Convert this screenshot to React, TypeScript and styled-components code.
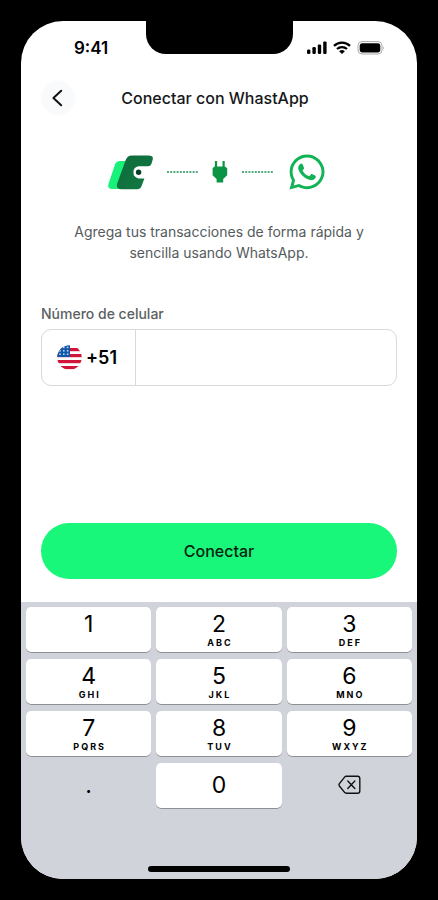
import React, { useState } from "react";
import styled, { createGlobalStyle } from "styled-components";
import { FaWhatsapp } from "react-icons/fa";

const GlobalStyle = createGlobalStyle`
  *, *::before, *::after { box-sizing: border-box; }
  body {
    margin: 0;
    background: #000;
    font-family: Inter, "Liberation Sans", sans-serif;
    color: #16181a;
  }
  button, input { font: inherit; color: inherit; }
`;

const Stage = styled.div`
  display: flex;
  min-height: 100vh;
  padding: 21px;
`;

const Phone = styled.div`
  flex: 1;
  display: flex;
  flex-direction: column;
  background: #fff;
  border-radius: 42px;
  overflow: hidden;
`;

const StatusBar = styled.div`
  display: grid;
  grid-template-columns: 1fr 147px 1fr;
`;

const Clock = styled.time`
  padding: 16px 0 0 53px;
  font-size: 17px;
  line-height: 22px;
  font-weight: 600;
  color: #000;
`;

const Notch = styled.div`
  height: 33px;
  background: #000;
  border-radius: 0 0 20px 20px;
`;

const Indicators = styled.div`
  display: flex;
  align-items: flex-start;
  gap: 6px;
  padding: 20px 0 0 14px;
`;

const Header = styled.header`
  display: grid;
  grid-template-columns: 34px 1fr 42px;
  align-items: center;
  padding: 22px 20px 0;
`;

const BackButton = styled.button`
  display: grid;
  place-items: center;
  width: 34px;
  height: 34px;
  padding: 0;
  border: 0;
  border-radius: 50%;
  background: #f8fafb;
`;

const Title = styled.h1`
  margin: 0;
  font-size: 16px;
  line-height: 24px;
  font-weight: 500;
  text-align: center;
`;

const Main = styled.main`
  flex: 1;
  display: flex;
  flex-direction: column;
  padding: 37px 20px 23px;
`;

const LinkRow = styled.div`
  display: flex;
  align-items: center;
  justify-content: center;
  gap: 14px;
  height: 40px;
  padding-right: 4px;
`;

const Description = styled.p`
  margin: 29px 0 0;
  padding: 0 24px;
  font-size: 14px;
  line-height: 21px;
  color: #555b5d;
  text-align: center;
`;

const Form = styled.form`
  flex: 1;
  display: flex;
  flex-direction: column;
  margin-top: 41px;
`;

const Label = styled.label`
  font-size: 14px;
  line-height: 20px;
  font-weight: 500;
  color: #5b6163;
`;

const PhoneField = styled.div`
  display: flex;
  height: 57px;
  margin-top: 5px;
  border: 1px solid #d6dada;
  border-radius: 10px;
  overflow: hidden;
`;

const Prefix = styled.span`
  display: flex;
  align-items: center;
  gap: 4px;
  width: 94px;
  padding-left: 15px;
  border-right: 1px solid #d6dada;
  font-size: 18px;
  font-weight: 600;
  color: #000;
`;

const NumberInput = styled.input`
  flex: 1;
  min-width: 0;
  padding: 0 16px;
  border: 0;
  outline: 0;
  background: transparent;
  font-size: 18px;
`;

const SubmitButton = styled.button`
  height: 56px;
  margin-top: auto;
  border: 0;
  border-radius: 28px;
  background: #18f77a;
  color: #07240f;
  font-size: 16px;
  font-weight: 500;
`;

const Keyboard = styled.section`
  display: flex;
  flex-direction: column;
  background: #d0d3da;
`;

const Keys = styled.div`
  display: grid;
  grid-template-columns: repeat(3, 1fr);
  grid-auto-rows: 46px;
  gap: 6px 5px;
  padding: 5px 5px 0;
`;

const Key = styled.button<{ $plain?: boolean; $centered?: boolean }>`
  display: flex;
  flex-direction: column;
  align-items: center;
  justify-content: ${(p) => (p.$centered ? "center" : "flex-start")};
  padding: ${(p) => (p.$centered ? "0 0 2px" : "4px 0 0")};
  border: 0;
  border-radius: 5px;
  background: ${(p) => (p.$plain ? "transparent" : "#fff")};
  box-shadow: ${(p) => (p.$plain ? "none" : "inset 0 -1px 0 #8e9096")};
  color: #000;
`;

const Digit = styled.span`
  font-size: 23px;
  line-height: 26px;
`;

const Letters = styled.span`
  padding-left: 2px;
  font-size: 9px;
  line-height: 11px;
  font-weight: 700;
  letter-spacing: 2px;
`;

const HomeIndicator = styled.div`
  width: 142px;
  height: 6px;
  margin: 57px auto 7px;
  border-radius: 3px;
  background: #000;
`;

const SignalIcon = () => (
  <svg width="20" height="14" viewBox="0 0 20 14" aria-hidden="true">
    <rect x="0" y="8.6" width="3.4" height="4.4" rx="1.2" />
    <rect x="5.4" y="6" width="3.4" height="7" rx="1.2" />
    <rect x="10.8" y="3.4" width="3.4" height="9.6" rx="1.2" />
    <rect x="16.2" y="0.4" width="3.4" height="12.6" rx="1.2" />
  </svg>
);

const WifiIcon = () => (
  <svg width="18" height="14" viewBox="0 0 18 14" aria-hidden="true">
    <g fill="none" stroke="#000" strokeWidth="2.3">
      <path d="M1 4.9 A11.6 11.6 0 0 1 17 4.9" />
      <path d="M4 8 A7.4 7.4 0 0 1 14 8" />
    </g>
    <path d="M9 13.1 L6.1 10.3 A4.3 4.3 0 0 1 11.9 10.3 Z" />
  </svg>
);

const BatteryIcon = () => (
  <svg width="28" height="14" viewBox="0 0 28 14" aria-hidden="true">
    <rect x="1" y="0.6" width="24" height="12.4" rx="4" fill="none" stroke="#a9a9a9" />
    <rect x="2.7" y="2.2" width="20.6" height="9.2" rx="2.6" />
    <path d="M26.3 4.8 Q28 6.8 26.3 8.8 Z" fill="#a9a9a9" />
  </svg>
);

const ChevronIcon = () => (
  <svg width="18" height="18" viewBox="0 0 18 18" fill="none" aria-hidden="true">
    <path
      d="M12.2 1.8 L4.4 9 L12.2 16.2"
      stroke="#101214"
      strokeWidth="2"
      strokeLinecap="round"
      strokeLinejoin="round"
    />
  </svg>
);

const WalletLogo = () => (
  <svg width="45" height="35" viewBox="0 0 45 35" aria-hidden="true">
    <defs>
      <linearGradient id="walletShade" x1="0" y1="0" x2="1" y2="1">
        <stop offset="0" stopColor="#0d6a3c" />
        <stop offset="1" stopColor="#127a42" />
      </linearGradient>
    </defs>
    <path
      d="M12 6 H21 L12 34 H4 Q-1 34 .6 28.5 L7 9.5 Q8.2 6 12 6 Z"
      fill="#18f27a"
    />
    <path
      d="M24 .5 H40.5 Q46 .5 44.6 5 L43.4 9 Q42.6 11.2 40 11.2 H30.5 A6.2 6.2 0 0 0 30.5 23.4 H36.4 L33.6 31 Q32.4 34.2 29 34.2 H13.5 Q7.5 34.2 9.2 28.6 L17.8 4.8 Q19.4 .5 24 .5 Z"
      fill="url(#walletShade)"
    />
    <circle cx="30.6" cy="17.3" r="2.7" fill="#0b3d25" />
  </svg>
);

const DottedLine = () => (
  <svg width="31" height="2" viewBox="0 0 31 2" aria-hidden="true">
    <path d="M0 1 H31" stroke="#1f8f55" strokeWidth="1.4" strokeDasharray="2 1.2" />
  </svg>
);

const PlugIcon = () => (
  <svg width="16" height="24" viewBox="0 0 16 24" fill="#0a9443" aria-hidden="true">
    <rect x="2.9" y="1" width="2.2" height="6" rx=".6" />
    <rect x="10.5" y="1" width="2.2" height="6" rx=".6" />
    <path d="M2.5 6.4 H13 L15.2 8.2 V15.2 L11.2 19 V22.6 H4.6 V19 L.6 15.2 V8.2 Z" />
  </svg>
);

const FlagIcon = () => (
  <svg width="25" height="25" viewBox="0 0 25 25" aria-hidden="true">
    <clipPath id="flagRound">
      <circle cx="12.5" cy="12.5" r="12.2" />
    </clipPath>
    <g clipPath="url(#flagRound)">
      <rect width="25" height="25" fill="#fff" />
      {[3, 9, 15, 21].map((y) => (
        <rect key={y} y={y} width="25" height="3.2" fill="#d0143a" />
      ))}
      <rect width="13" height="12" fill="#1257a8" />
      {[1.6, 5, 8.4].map((y) =>
        [2.2, 6, 9.8].map((x) => (
          <rect key={`${x}-${y}`} x={x} y={y} width="1.6" height="1.6" fill="#b5d2ee" />
        ))
      )}
    </g>
  </svg>
);

const DeleteIcon = () => (
  <svg
    width="23"
    height="20"
    viewBox="0 0 23 20"
    fill="none"
    stroke="#111"
    strokeWidth="1.4"
    strokeLinecap="round"
    strokeLinejoin="round"
    aria-hidden="true"
  >
    <path d="M8.2 1.2 H19.6 Q21.8 1.2 21.8 3.4 V16 Q21.8 18.2 19.6 18.2 H8.2 Q7.4 18.2 6.8 17.6 L1.4 11 Q.6 9.8 1.4 8.6 L6.8 1.9 Q7.4 1.2 8.2 1.2 Z" />
    <path d="M9.8 6.1 L16.8 13.5 M16.8 6.1 L9.8 13.5" />
  </svg>
);

const KEYS = [
  { digit: "1", letters: "" },
  { digit: "2", letters: "ABC" },
  { digit: "3", letters: "DEF" },
  { digit: "4", letters: "GHI" },
  { digit: "5", letters: "JKL" },
  { digit: "6", letters: "MNO" },
  { digit: "7", letters: "PQRS" },
  { digit: "8", letters: "TUV" },
  { digit: "9", letters: "WXYZ" },
];

export default function App() {
  const [number, setNumber] = useState("");
  const press = (value: string) => setNumber((n) => n + value);

  return (
    <>
      <GlobalStyle />
      <Stage>
        <Phone>
          <StatusBar>
            <Clock>9:41</Clock>
            <Notch />
            <Indicators>
              <SignalIcon />
              <WifiIcon />
              <BatteryIcon />
            </Indicators>
          </StatusBar>
          <Header>
            <BackButton type="button" aria-label="Volver">
              <ChevronIcon />
            </BackButton>
            <Title>Conectar con WhastApp</Title>
          </Header>
          <Main>
            <LinkRow>
              <WalletLogo />
              <DottedLine />
              <PlugIcon />
              <DottedLine />
              <FaWhatsapp size={40} color="#12b354" aria-label="WhatsApp" />
            </LinkRow>
            <Description>
              Agrega tus transacciones de forma rápida y sencilla usando WhatsApp.
            </Description>
            <Form onSubmit={(e) => e.preventDefault()}>
              <Label htmlFor="phone">Número de celular</Label>
              <PhoneField>
                <Prefix>
                  <FlagIcon />
                  +51
                </Prefix>
                <NumberInput
                  id="phone"
                  type="tel"
                  value={number}
                  onChange={(e) => setNumber(e.target.value)}
                />
              </PhoneField>
              <SubmitButton type="submit">Conectar</SubmitButton>
            </Form>
          </Main>
          <Keyboard aria-label="Teclado">
            <Keys>
              {KEYS.map(({ digit, letters }) => (
                <Key key={digit} type="button" onClick={() => press(digit)}>
                  <Digit>{digit}</Digit>
                  {letters && <Letters>{letters}</Letters>}
                </Key>
              ))}
              <Key type="button" $plain $centered onClick={() => press(".")}>
                <Digit>.</Digit>
              </Key>
              <Key type="button" $centered onClick={() => press("0")}>
                <Digit>0</Digit>
              </Key>
              <Key
                type="button"
                $plain
                $centered
                aria-label="Borrar"
                onClick={() => setNumber((n) => n.slice(0, -1))}
              >
                <DeleteIcon />
              </Key>
            </Keys>
            <HomeIndicator />
          </Keyboard>
        </Phone>
      </Stage>
    </>
  );
}
